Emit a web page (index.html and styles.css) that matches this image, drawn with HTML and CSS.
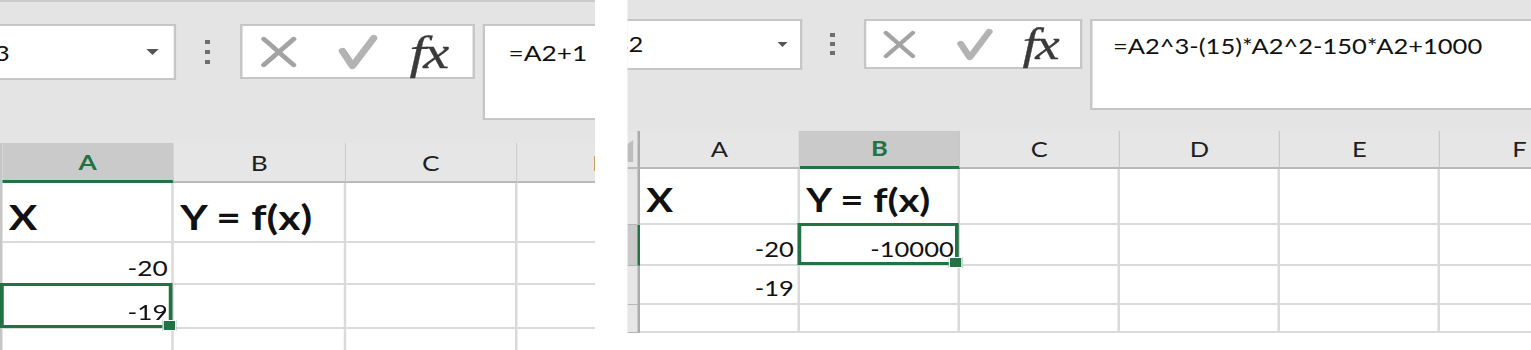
FILE: index.html
```html
<!DOCTYPE html>
<html lang="en">
<head>
    <meta charset="UTF-8">
    <meta name="viewport" content="width=device-width, initial-scale=1.0">
    <title>Formula bar - cubic function</title>
    <link rel="stylesheet" href="styles.css">
</head>
<body>
    <div class="stage">
        <!-- first capture: A3 = A2 + 1 -->
        <section class="sheet sheet-left">
            <div class="formula-bar">
                <div class="name-box"><span class="name">A3</span><span class="caret"></span></div>
                <div class="grip"><i></i><i></i><i></i></div>
                <div class="fx-buttons">
                    <svg class="icon-cancel" viewBox="0 0 30 32">
                        <path d="M3 3 C 10 10, 18 20, 27 29"/>
                        <path d="M27 3 L 3 29"/>
                    </svg>
                    <svg class="icon-enter" viewBox="0 0 32 36">
                        <path d="M4 17 L 12 32 L 29 4"/>
                    </svg>
                    <span class="fx">fx</span>
                </div>
                <div class="formula">=A2+1</div>
            </div>

            <div class="grid">
                <div class="col-head is-active">A</div>
                <div class="col-head">B</div>
                <div class="col-head">C</div>
                <div class="col-head">D</div>

                <div class="cell title">X</div>
                <div class="cell title">Y = f(x)</div>
                <div class="cell"></div>
                <div class="cell"></div>

                <div class="cell num">-20</div>
                <div class="cell"></div>
                <div class="cell"></div>
                <div class="cell"></div>

                <div class="cell num is-active">-19</div>
                <div class="cell"></div>
                <div class="cell"></div>
                <div class="cell"></div>

                <div class="cell"></div>
                <div class="cell"></div>
                <div class="cell"></div>
                <div class="cell"></div>
            </div>
        </section>

        <!-- second capture: B2 = x^3 - 15x^2 - 150x + 1000 -->
        <section class="sheet sheet-right">
            <div class="formula-bar">
                <div class="name-box"><span class="name">B2</span><span class="caret"></span></div>
                <div class="grip"><i></i><i></i><i></i></div>
                <div class="fx-buttons">
                    <svg class="icon-cancel" viewBox="0 0 30 32">
                        <path d="M3 3 C 10 10, 18 20, 27 29"/>
                        <path d="M27 3 L 3 29"/>
                    </svg>
                    <svg class="icon-enter" viewBox="0 0 32 36">
                        <path d="M4 17 L 12 32 L 29 4"/>
                    </svg>
                    <span class="fx">fx</span>
                </div>
                <div class="formula">=A2^3-(15)*A2^2-150*A2+1000</div>
            </div>

            <div class="grid">
                <div class="corner"><span class="select-all"></span></div>
                <div class="col-head">A</div>
                <div class="col-head is-active">B</div>
                <div class="col-head">C</div>
                <div class="col-head">D</div>
                <div class="col-head">E</div>
                <div class="col-head">F</div>

                <div class="row-head"></div>
                <div class="cell title">X</div>
                <div class="cell title">Y = f(x)</div>
                <div class="cell"></div>
                <div class="cell"></div>
                <div class="cell"></div>
                <div class="cell"></div>

                <div class="row-head is-active"></div>
                <div class="cell num">-20</div>
                <div class="cell num is-active">-10000</div>
                <div class="cell"></div>
                <div class="cell"></div>
                <div class="cell"></div>
                <div class="cell"></div>

                <div class="row-head"></div>
                <div class="cell num">-19</div>
                <div class="cell"></div>
                <div class="cell"></div>
                <div class="cell"></div>
                <div class="cell"></div>
                <div class="cell"></div>

                <div class="row-head"></div>
                <div class="cell"></div>
                <div class="cell"></div>
                <div class="cell"></div>
                <div class="cell"></div>
                <div class="cell"></div>
                <div class="cell"></div>
            </div>
        </section>
    </div>
</body>
</html>
```

FILE: styles.css
```css
* {
    box-sizing: border-box;
}

body {
    margin: 0;
    background: #ffffff;
    font-family: Lato, "Liberation Sans", sans-serif;
    color: #111111;
    overflow: hidden;
}

/* the captures are stretched sideways, so the whole stage is too */
.stage {
    display: flex;
    align-items: flex-start;
    width: 1224.8px;
    transform: scaleX(1.25);
    transform-origin: 0 0;
}

.sheet {
    flex: none;
    overflow: hidden;
    background: #e4e4e4;
}

.sheet-left {
    width: 476px;
    height: 350px;
    border-top: 2px solid #cbcbcb;
    --fs: 21px;
    --fs-big: 34px;
}

.sheet-right {
    width: 723.2px;
    height: 333px;
    margin-left: 25.6px;
    --fs: 20.4px;
    --fs-big: 32px;
}

/* ---------- formula bar ---------- */

.formula-bar {
    display: flex;
    align-items: flex-start;
}

.sheet-left .formula-bar {
    height: 141px;
    padding-top: 22px;
}

.sheet-right .formula-bar {
    height: 131px;
    padding-top: 19px;
}

.name-box,
.fx-buttons,
.formula {
    flex: none;
    background: #ffffff;
    border: 2px solid #c6c6c6;
}

.name-box {
    display: flex;
    align-items: center;
    font-size: var(--fs);
    line-height: 1;
}

.sheet-left .name-box {
    width: 180px;
    height: 56px;
    margin-left: -39.2px;
    padding: 0 12px 0 18.5px;
}

.sheet-right .name-box {
    width: 170px;
    height: 51px;
    margin-left: -30px;
    padding: 0 10px 0 16px;
}

.caret {
    margin-left: auto;
    width: 0;
    height: 0;
    border-left: 5px solid transparent;
    border-right: 5px solid transparent;
    border-top: 6px solid #555555;
}

.sheet-right .caret {
    border-left-width: 4px;
    border-right-width: 4px;
    border-top-width: 5px;
}

.grip {
    flex: none;
    display: flex;
    flex-direction: column;
}

.grip i {
    width: 4px;
    height: 4px;
    background: #6e6e6e;
}

.sheet-left .grip {
    gap: 6px;
    margin: 16px 23.6px 0;
}

.sheet-right .grip {
    gap: 5px;
    margin: 14px 23.6px 0 22px;
}

.fx-buttons {
    display: flex;
    align-items: center;
}

.sheet-left .fx-buttons {
    width: 188px;
    height: 55px;
    padding-left: 14px;
}

.sheet-right .fx-buttons {
    width: 174.4px;
    height: 50px;
    padding-left: 13.2px;
}

.fx-buttons svg {
    flex: none;
    fill: none;
    stroke-linecap: round;
    stroke-linejoin: round;
}

.icon-cancel {
    stroke: #a3a3a3;
    stroke-width: 4.2;
}

.icon-enter {
    stroke: #b3b3b3;
    stroke-width: 6;
}

.sheet-left .icon-cancel {
    width: 30px;
    height: 32px;
}

.sheet-left .icon-enter {
    width: 32px;
    height: 36px;
    margin-left: 31.6px;
}

.sheet-right .icon-cancel {
    width: 27px;
    height: 29px;
}

.sheet-right .icon-enter {
    width: 31px;
    height: 33px;
    margin-left: 30.6px;
}

.fx {
    font-family: "Liberation Serif", "DejaVu Serif", serif;
    font-style: italic;
    color: #3a3a3a;
    line-height: 1;
    letter-spacing: -2px;
    -webkit-text-stroke: 0.3px #3a3a3a;
}

.sheet-left .fx {
    font-size: 47px;
    margin-left: 26px;
    margin-top: 2px;
}

.sheet-right .fx {
    font-size: 44px;
    margin-left: 23px;
    margin-top: 2px;
}

.formula {
    font-size: var(--fs);
    line-height: 1;
    white-space: nowrap;
}

.sheet-left .formula {
    width: 120px;
    height: 96px;
    margin-left: 6.4px;
    padding: 15.5px 0 0 18.5px;
}

.sheet-right .formula {
    width: 400px;
    height: 91px;
    margin-left: 6.4px;
    padding: 15px 0 0 16.4px;
}

/* ---------- grid ---------- */

.grid {
    display: grid;
    background: #ffffff;
}

.sheet-left .grid {
    grid-template-columns: 137.2px 137.6px 136.8px 137.6px;
    grid-template-rows: 40px 60px 42px 44px 30px;
    border-left: 2px solid #c6c6c6;
}

.sheet-right .grid {
    grid-template-columns: 10.4px repeat(6, 128px);
    grid-template-rows: 38px 56px 41px 39px 28px;
}

.col-head {
    display: flex;
    align-items: center;
    justify-content: center;
    background: #e6e6e6;
    border-right: 1px solid #c8c8c8;
    border-bottom: 2px solid #b9b9b9;
    color: #1e1e1e;
    font-size: var(--fs);
    line-height: 1;
}

.col-head.is-active {
    background: #cacaca;
    color: #217346;
    font-weight: 700;
    border-bottom: 3px solid #217346;
}

.corner {
    background: #e6e6e6;
    border-right: 2px solid #ababab;
    border-bottom: 2px solid #b9b9b9;
}

.select-all {
    display: block;
    width: 5px;
    height: 22px;
    margin-top: 9px;
    background: #bdbdbd;
    clip-path: polygon(0 20%, 100% 0, 100% 100%, 0 100%);
}

.row-head {
    background: #e6e6e6;
    border-right: 2px solid #ababab;
    border-bottom: 1px solid #b5b5b5;
}

.row-head.is-active {
    background: #cacaca;
    border-right-color: #217346;
}

.cell {
    display: flex;
    align-items: flex-end;
    padding: 0 3px 5px;
    border-right: 2px solid #dadada;
    border-bottom: 2px solid #dadada;
    font-size: var(--fs);
    line-height: 1;
    white-space: nowrap;
}

.cell.title {
    font-size: var(--fs-big);
    font-weight: 700;
    padding: 0 0 7px 5px;
}

.cell.num {
    justify-content: flex-end;
}

/* selection frame and fill handle sit over the neighbouring grid lines */
.cell.is-active {
    position: relative;
}

.cell.is-active::after {
    content: "";
    position: absolute;
    top: -2px;
    right: -1px;
    bottom: -1px;
    left: -2px;
    border: 3px solid #217346;
    z-index: 1;
}

.cell.is-active::before {
    content: "";
    position: absolute;
    right: -4px;
    bottom: -4px;
    width: 9px;
    height: 9px;
    background: #217346;
    border: 1px solid #ffffff;
    z-index: 2;
}
```
